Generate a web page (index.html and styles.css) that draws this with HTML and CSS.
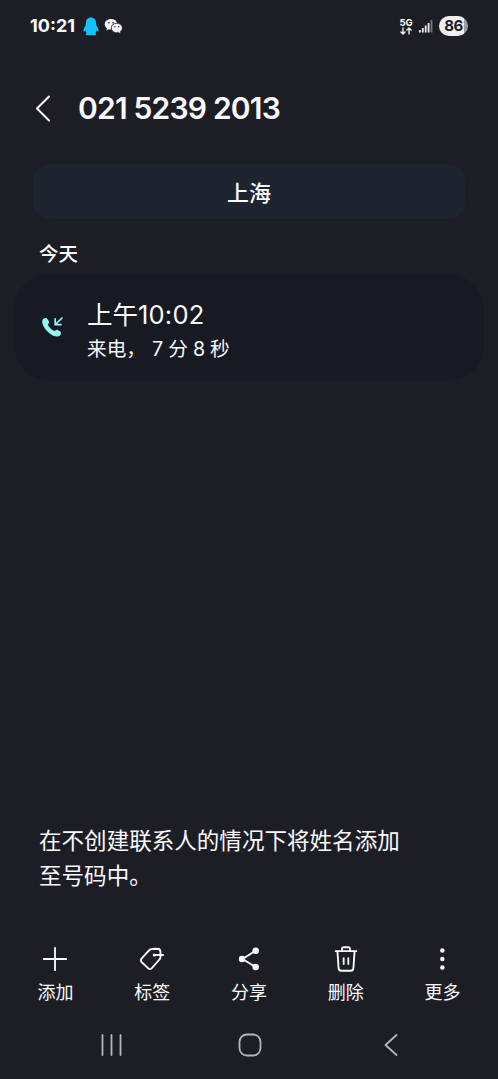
FILE: index.html
```html
<!DOCTYPE html>
<html lang="zh-CN">
<head>
<meta charset="utf-8">
<title>通话详情</title>
<link rel="stylesheet" href="styles.css">
</head>
<body>
<div class="phone">
  <header class="status">
    <span class="clock">10:21</span>
    <svg class="qq" width="16" height="19" viewBox="0 0 16 19"><path fill="#12c3fb" d="M8 .5C4.500 .5 2.800 3 2.900 6.500L2.600 8.500C1 10.500 .2 13 .5 14.300C.8 15 1.700 14.300 2.300 13.300C2.500 14.300 3 15.200 3.700 16C2.300 16.700 2.300 18.300 4 18.300H12C13.700 18.300 13.700 16.700 12.300 16C13 15.200 13.500 14.300 13.700 13.300C14.300 14.300 15.200 15 15.500 14.300C15.800 13 15 10.500 13.400 8.500L13.100 6.500C13.200 3 11.500 .5 8 .5Z"/></svg>
    <svg class="wechat" width="19" height="17" viewBox="0 0 19 17"><path fill="#f5f5f7" d="M7 1C3.300 1 .7 3.300 .7 6.300C.7 8 1.600 9.500 3 10.400L2.500 12.600L4.900 11.300Q6 11.600 7.200 11.500C6.200 7.500 9.300 5 13 5C12.500 2.600 10 1 7 1Z"/><path fill="#f5f5f7" stroke="#1d1d26" stroke-width=".6" d="M12.700 5.300C9.600 5.300 7.400 7.400 7.400 10C7.400 12.700 9.700 14.700 12.700 14.700L14.500 14.500L16.800 15.800L16.200 13.700C17.500 12.800 18.300 11.500 18.300 10C18.300 7.400 15.900 5.300 12.700 5.300Z"/><g fill="#1d1d26"><circle cx="5" cy="4.800" r=".8"/><circle cx="9" cy="4.800" r=".8"/><circle cx="11" cy="8.700" r=".7"/><circle cx="14.700" cy="8.700" r=".7"/></g></svg>
    <div class="net"><span class="net-type">5G</span>
      <svg width="12" height="8" viewBox="0 0 12 8" fill="none" stroke="#eee" stroke-width="1.400"><path d="M3 .5V7M.5 4.500L3 7L5.500 4.500M9 7.500V1M6.500 3.500L9 1L11.500 3.500"/></svg>
    </div>
    <svg class="signal" width="14" height="14" viewBox="0 0 14 14" fill="#eee"><rect x="0" y="11" width="1.800" height="2.500"/><rect x="2.900" y="9" width="1.800" height="4.500"/><rect x="5.800" y="6.500" width="1.800" height="7"/><rect x="8.700" y="4" width="1.800" height="9.500"/><rect x="11.600" y="1" width="1.800" height="12.500" fill="#77777d"/></svg>
    <span class="battery">86</span>
  </header>

  <div class="title">
    <svg width="16" height="28" viewBox="0 0 16 28" fill="none" stroke="#fafafa" stroke-width="2" stroke-linecap="round" stroke-linejoin="round"><path d="M14 2.500L2 14.500L14 26.500"/></svg>
    <h1 class="number">021 5239 2013</h1>
  </div>

  <div class="place">上海</div>
  <h2 class="day">今天</h2>

  <section class="call">
    <svg width="24" height="24" viewBox="0 0 24 24"><path fill="#93f7f8" d="M2.200 4.100C3.600 2.700 5.600 2.700 6.600 4.200L7.700 6.100C8.300 7.200 8 8.200 7.200 9.200C6.800 10 7 10.400 7.700 11.300C9 13.100 10.500 14.500 12.300 15.600C13.100 16.100 13.600 15.900 14.300 15.400C15.200 14.800 16.100 14.600 17.100 15.200L18.900 16.300C20.400 17.300 20.400 19 19.100 20.300C16.800 22.400 13.300 21.700 9.800 19.300C7.100 17.400 5 15.200 3.400 12.700C1.100 9.100 .5 5.900 2.200 4.100Z"/><path fill="none" stroke="#93f7f8" stroke-width="1.700" stroke-linecap="round" d="M21 3L14.300 9.500M14.200 3.800V9.600H20"/></svg>
    <div class="call-text">
      <div class="time">上午<span class="latin">10:02</span></div>
      <div class="detail">来电，<span class="num seven">7</span>分<span class="num">8</span>秒</div>
    </div>
  </section>

  <p class="hint">在不创建联系人的情况下将姓名添加至号码中。</p>

  <nav class="actions">
    <div class="action"><svg viewBox="0 0 28 28"><path d="M14 2V26M2 14H26"/></svg><span>添加</span></div>
    <div class="action"><svg viewBox="0 0 28 28"><path d="M21.800 14.800L13.800 23.800Q11.800 25.900 9.700 23.800L3 17.500Q1 15.500 3 13.300L10.500 5Q12 3.300 14 3.200L19.800 3Q22.800 3 23 5.700L23.200 11.300Q23.200 13.200 21.800 14.800Z"/><path d="M17 9.700H26"/><circle class="solid" cx="16.500" cy="9.700" r="1.700"/></svg><span>标签</span></div>
    <div class="action"><svg viewBox="0 0 28 28"><path d="M21 5.200L7 14L21 22.700"/><g class="solid"><circle cx="21.200" cy="5.200" r="3.500"/><circle cx="6.500" cy="14" r="3.500"/><circle cx="21.200" cy="22.700" r="3.500"/></g></svg><span>分享</span></div>
    <div class="action"><svg viewBox="0 0 28 28"><path d="M2.800 5.500H25.200M9.700 5V3Q9.700 1.300 11.200 1.300H16.800Q18.300 1.300 18.300 3V5M4.800 6L6 23.500Q6.200 26.700 9 26.700H19Q21.800 26.700 22 23.500L23.200 6M11.500 13V19.500M16.500 13V19.500"/></svg><span>删除</span></div>
    <div class="action"><svg viewBox="0 0 28 28"><g class="solid"><circle cx="13.300" cy="4.800" r="2.400"/><circle cx="13.300" cy="14" r="2.400"/><circle cx="13.300" cy="23.200" r="2.400"/></g></svg><span>更多</span></div>
  </nav>

  <footer class="sysnav">
    <svg width="22" height="22" viewBox="0 0 22 22"><path d="M1.500 1V21M10.500 1V21M19.500 1V21"/></svg>
    <svg class="home" width="24" height="24" viewBox="0 0 24 24"><rect x="1.500" y="1.500" width="21" height="21" rx="7.500"/></svg>
    <svg width="14" height="24" viewBox="0 0 14 24"><path d="M12.500 2L1.500 12L12.500 22"/></svg>
  </footer>
</div>
</body>
</html>
```
FILE: styles.css
```css
* { box-sizing: border-box; }
body { margin: 0; background: #1d1d26; }
svg { display: block; flex: none; }
.phone {
  display: flex;
  flex-direction: column;
  width: 498px;
  height: 1079px;
  overflow: hidden;
  color: #fafafa;
  font-family: Inter, "Noto Sans CJK SC", sans-serif;
}
.status {
  display: flex;
  align-items: center;
  height: 52px;
  padding: 0 30px;
}
.clock { width: 53px; font-size: 18px; line-height: 20px; padding-bottom: 1px; font-weight: 650; }
.wechat { margin-left: 5px; }
.net {
  display: flex;
  flex-direction: column;
  align-items: center;
  width: 14px;
  margin-left: auto;
}
.net-type { font-size: 9.5px; line-height: 9px; font-weight: 700; }
.signal { margin-left: 6px; }
.battery {
  width: 29px;
  height: 20px;
  margin-left: 6px;
  border-radius: 10px;
  background: linear-gradient(90deg, #f0f0f2 86%, #9b9ba0 86%);
  color: #1d1d26;
  font-size: 15px;
  line-height: 20px;
  font-weight: 700;
  letter-spacing: -.4px;
  text-align: center;
}
.title {
  display: flex;
  align-items: center;
  gap: 27px;
  height: 112px;
  padding: 0 35px;
}
.title svg { margin-top: -1px; }
.number { margin: 0; font-size: 30px; font-weight: 600; white-space: nowrap; letter-spacing: -.8px; }
.place {
  height: 55px;
  margin: 0 33px;
  border-radius: 17px;
  background: #1d242f;
  font-size: 22px;
  line-height: 58px;
  font-weight: 500;
  text-align: center;
}
.day { height: 55px; margin: 0; padding: 16px 39px 0; font-size: 19.500px; line-height: 39px; font-weight: 500; }
.call {
  display: flex;
  gap: 22px;
  height: 107px;
  margin: 0 14px;
  padding: 23px 26px 0 27px;
  border-radius: 36px;
  background: #171923;
}
.call > svg { margin-top: 18px; }
.call-text { margin-left: -1px; padding-left: 1px; }
.time { font-size: 25.500px; line-height: 35px; font-weight: 400; white-space: nowrap; }
.latin { letter-spacing: .2px; }
.detail { font-size: 19.700px; line-height: 35px; white-space: nowrap; }
.num { margin: 0 5px; }
.seven { margin-left: 6px; }
.hint {
  width: 366px;
  height: 70px;
  margin: auto 0 0 39px;
  font-size: 22.560px;
  line-height: 35px;
}
.actions { display: flex; height: 117px; padding: 53px 7px 0; }
.action { display: flex; flex: 1; flex-direction: column; align-items: center; font-size: 18px; line-height: 28px; }
.action svg { width: 26px; height: 26px; margin-bottom: 7px; fill: none; stroke: #fafafa; stroke-width: 2; stroke-linecap: round; stroke-linejoin: round; }
.action .solid { fill: #fafafa; stroke: none; }
.sysnav {
  display: flex;
  align-items: center;
  justify-content: space-between;
  height: 69px;
  padding: 1px 100px 0 101px;
}
.sysnav svg { fill: none; stroke: #b5b5bb; stroke-width: 1.800; stroke-linecap: round; stroke-linejoin: round; }
.sysnav .home { margin-right: 7px; }
```
